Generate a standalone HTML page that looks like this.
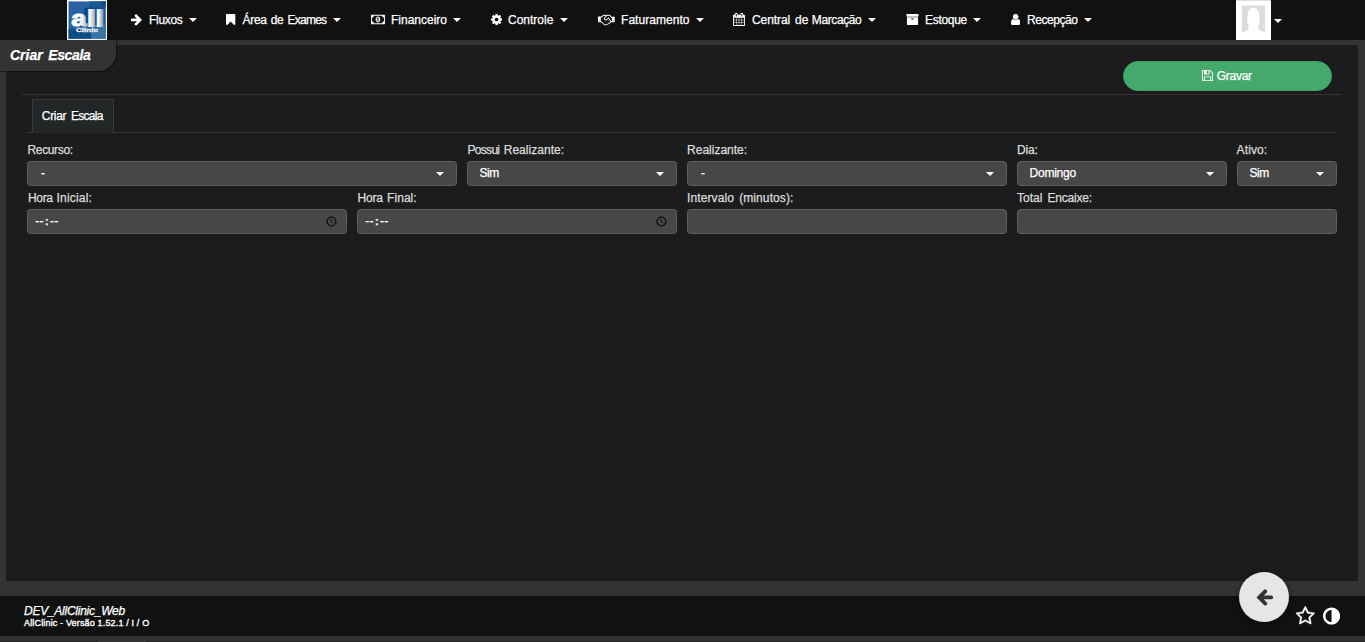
<!DOCTYPE html>
<html lang="pt-br">
<head>
<meta charset="utf-8">
<title>Criar Escala</title>
<style>
*{box-sizing:border-box;margin:0;padding:0}
html,body{width:1365px;height:642px;overflow:hidden;background:#333;color:#fff;
  font-family:"Liberation Sans","DejaVu Sans",sans-serif;font-size:12px;-webkit-text-stroke-width:0.25px}
.ic{position:absolute;display:block}
.navbar{position:absolute;left:0;top:0;width:1365px;height:40px;background:#111}
.logo{position:absolute;left:67px;top:0;width:40px;height:40px;display:block}
.nav{list-style:none}
.nav li{display:block}
.nav a.t{position:absolute;top:13px;line-height:15px;font-size:12px;color:#fff;white-space:nowrap}
.caret{position:absolute;width:0;height:0;border-left:4px solid transparent;border-right:4px solid transparent;border-top:4px solid #fff}
.avatar{position:absolute;left:1236px;top:0;width:35px;height:40px;display:block}
.panel{position:absolute;left:6px;top:45px;width:1352px;height:536px;background:#1c1c1c}
.pagetitle{position:absolute;left:0;top:40px;width:116.4px;height:31px;background:#333;border-bottom-right-radius:17.5px;box-shadow:0.5px 0.5px 1px rgba(0,0,0,.45);
  font-weight:bold;font-style:italic;font-size:14px;line-height:31px;padding-left:10px;color:#fff;white-space:nowrap}
.btn{position:absolute;left:1123px;top:61px;width:209px;height:30px;border-radius:15px;background:#44a96b;border:1px solid #3fa266;color:#fff}
.btn span{position:absolute;left:92.7px;top:7px;line-height:15px;font-size:12px;letter-spacing:-0.25px}
.hr1{position:absolute;left:22px;top:94px;width:1320px;height:1px;background:#333}
.hr2{position:absolute;left:27px;top:132px;width:1310px;height:1px;background:#333}
.tab{position:absolute;left:32px;top:99px;width:82px;height:34px;background:#232627;border:1px solid #373a3b;border-bottom:none;
  font-size:12px;line-height:32px;padding-left:8.8px;color:#fff;white-space:nowrap;letter-spacing:-0.3px}
label{position:absolute;font-size:12px;line-height:15px;color:#ddd;white-space:nowrap}
.fld{position:absolute;height:25px;background:#474747;border:1px solid #5e5e5e;border-radius:3.5px;color:#fff;font-size:12px;line-height:23px;white-space:nowrap}
.sel{padding-left:11.6px}
.inp{padding-left:7.2px}
.inp .d{letter-spacing:0.35px}
.inp b{margin:0 1.4px 0 1px;font-size:11px}
.fld .caret{right:12px;top:10px}
.clk{position:absolute;right:8.7px;top:5.6px}
.footer{position:absolute;left:0;top:596px;width:1365px;height:40px;background:#111}
.footer .l1{position:absolute;left:24px;top:8px;font-style:italic;font-size:12px;line-height:15px;white-space:nowrap;letter-spacing:-0.25px}
.footer .l2{position:absolute;left:24px;top:21.5px;font-size:9px;line-height:11px;white-space:nowrap;-webkit-text-stroke-width:0.35px;letter-spacing:0.16px}
.bottom{position:absolute;left:0;top:636px;width:1365px;height:6px;background:#333}
.bottom i{position:absolute;left:0;top:5px;width:98px;height:1px;background:#252525}
.bottom b{position:absolute;left:146px;top:5px;width:1219px;height:1px;background:#252525}
.back{position:absolute;left:1239px;top:572px;width:50px;height:50px;border-radius:50%;background:#e6e6e6;box-shadow:0 1px 6px rgba(0,0,0,.45)}
</style>
</head>
<body>
<div class="navbar">
  <svg class="logo" viewBox="0 0 40 40">
    <defs>
      <linearGradient id="ga" gradientUnits="userSpaceOnUse" x1="3.3" x2="15" y1="0" y2="0"><stop offset="0.6" stop-color="#fff"/><stop offset="1" stop-color="#b9c3cf"/></linearGradient>
      <linearGradient id="gl" gradientUnits="userSpaceOnUse" x1="16" x2="21" y1="0" y2="0"><stop offset="0.3" stop-color="#fff"/><stop offset="1" stop-color="#aeb6c0"/></linearGradient>
      <linearGradient id="gl2" gradientUnits="userSpaceOnUse" x1="22.6" x2="27.6" y1="0" y2="0"><stop offset="0.3" stop-color="#fff"/><stop offset="1" stop-color="#7f9dbd"/></linearGradient>
    </defs>
    <rect width="40" height="40" fill="#fff"/>
    <rect x="1.5" y="1.4" width="37.3" height="37.3" fill="#2b62a3"/>
    <rect x="22.4" y="1.4" width="16.4" height="7" fill="#1a5895"/>
    <rect x="34" y="1.4" width="4.8" height="4.2" fill="#0c4a86"/>
    <rect x="17" y="7.5" width="20.5" height="18" fill="#0c4b8b"/>
    <rect x="1.5" y="28.8" width="23" height="9.9" fill="#0e4d85"/>
    <rect x="24.5" y="25.3" width="14.3" height="13.4" fill="#3d74a8"/>
    <text transform="translate(0 25.95) scale(1.3 1)" x="3.3 15.7 22.25" y="0" font-family="Liberation Sans, sans-serif" font-weight="bold" font-size="22.4" stroke-width="2" stroke-linejoin="miter"><tspan font-size="21.4" stroke-width="1" fill="url(#ga)" stroke="url(#ga)">a</tspan><tspan fill="url(#gl)" stroke="url(#gl)">l</tspan><tspan fill="url(#gl2)" stroke="url(#gl2)">l</tspan></text>
    <text x="9" y="31.9" textLength="22" lengthAdjust="spacingAndGlyphs" font-family="Liberation Sans, sans-serif" font-weight="bold" font-size="5.7" fill="#f2f2f2" stroke="#f2f2f2" stroke-width="0.3">Clinic</text>
  </svg>
  <ul class="nav">
    <li><svg class="ic" style="left:131.30px;top:13.46px;" width="11.14" height="13" viewBox="0 0 1536 1792"><path fill="#fff" d="M1472 960C1472 926 1459 893 1435 870L784 219C760 195 727 181 693 181C659 181 627 195 603 219L528 294C504 317 490 350 490 384C490 418 504 451 528 474L821 768H117C45 768 0 828 0 896V1024C0 1092 45 1152 117 1152H821L528 1445C504 1469 490 1502 490 1536C490 1570 504 1603 528 1627L603 1702C627 1725 659 1739 693 1739C727 1739 760 1725 784 1702L1435 1051C1459 1027 1472 994 1472 960Z"/></svg><a class="t" style="left:149.0px;letter-spacing:-0.3px">Fluxos</a><b class="caret" style="left:189px;top:18px"></b></li>
    <li><svg class="ic" style="left:226.40px;top:13.46px;" width="9.29" height="13" viewBox="0 0 1280 1792"><path fill="#fff" d="M1164 128C1133 128 147 128 116 128C101 128 86 131 72 137C28 154 0 195 0 240V1529C0 1574 28 1615 72 1632C86 1638 101 1641 116 1641C147 1641 176 1629 199 1608L640 1184L1081 1608C1104 1629 1133 1640 1164 1640C1179 1640 1194 1638 1208 1632C1252 1615 1280 1574 1280 1529V240C1280 195 1252 154 1208 137C1194 131 1179 128 1164 128Z"/></svg><a class="t" style="left:242.5px;letter-spacing:-0.3px">Área <span style="margin-left:1px">de</span> <span style="letter-spacing:-0.72px;margin-left:0.9px">Exames</span></a><b class="caret" style="left:333px;top:18px"></b></li>
    <li><svg class="ic" style="left:370.80px;top:13.46px;" width="13.93" height="13" viewBox="0 0 1920 1792"><path fill="#fff" d="M768 1152V1056H896V768H894C878 793 863 804 839 825L762 745L910 608H1024V1056H1152V1152ZM1280 896C1280 714 1170 480 960 480C750 480 640 714 640 896C640 1078 750 1312 960 1312C1170 1312 1280 1078 1280 896ZM1792 1152C1651 1152 1536 1267 1536 1408H384C384 1267 269 1152 128 1152V640C269 640 384 525 384 384H1536C1536 525 1651 640 1792 640V1152ZM1920 320C1920 285 1891 256 1856 256H64C29 256 0 285 0 320V1472C0 1507 29 1536 64 1536H1856C1891 1536 1920 1507 1920 1472Z"/></svg><a class="t" style="left:391.0px;letter-spacing:0px">Financeiro</a><b class="caret" style="left:453px;top:18px"></b></li>
    <li><svg class="ic" style="left:490.80px;top:13.46px;" width="11.14" height="13" viewBox="0 0 1536 1792"><path fill="#fff" d="M1024 896C1024 1037 909 1152 768 1152C627 1152 512 1037 512 896C512 755 627 640 768 640C909 640 1024 755 1024 896ZM1536 787C1536 770 1524 754 1507 751L1324 723C1314 690 1300 657 1283 625C1317 578 1354 534 1388 488C1393 481 1396 474 1396 465C1396 457 1394 449 1389 443C1347 384 1277 322 1224 273C1217 267 1208 263 1199 263C1190 263 1181 266 1175 272L1033 379C1004 364 974 352 943 342L915 158C913 141 897 128 879 128H657C639 128 625 140 621 156C605 216 599 281 592 342C561 352 530 365 501 380L363 273C355 267 346 263 337 263C303 263 168 409 144 442C139 449 135 456 135 465C135 474 139 482 145 489C182 534 218 579 252 627C236 657 223 687 213 719L27 747C12 750 0 768 0 783V1005C0 1022 12 1038 29 1041L212 1068C222 1102 236 1135 253 1167C219 1214 182 1258 148 1304C143 1311 140 1318 140 1327C140 1335 142 1343 147 1350C189 1408 259 1470 312 1518C319 1525 328 1529 337 1529C346 1529 355 1526 362 1520L503 1413C532 1428 562 1440 593 1450L621 1634C623 1651 639 1664 657 1664H879C897 1664 911 1652 915 1636C931 1576 937 1511 944 1450C975 1440 1006 1427 1035 1412L1173 1520C1181 1525 1190 1529 1199 1529C1233 1529 1368 1382 1392 1350C1398 1343 1401 1336 1401 1327C1401 1318 1397 1309 1391 1302C1354 1257 1318 1213 1284 1164C1300 1135 1312 1105 1323 1073L1508 1045C1524 1042 1536 1024 1536 1009Z"/></svg><a class="t" style="left:508.0px;letter-spacing:0px">Controle</a><b class="caret" style="left:560px;top:18px"></b></li>
    <li><svg class="ic" style="left:598.00px;top:13.46px;" width="16.71" height="13" viewBox="0 0 2304 1792"><path fill="#fff" d="M192 1152C108 1152 108 1024 192 1024C276 1024 276 1152 192 1152ZM1665 1094C1738 1188 1676 1313 1557 1313C1545 1313 1523 1312 1514 1303C1517 1336 1487 1378 1464 1399C1429 1432 1385 1447 1337 1443C1314 1520 1227 1562 1152 1536C1120 1568 1072 1583 1027 1583C940 1583 861 1531 800 1472L503 1180C468 1146 428 1152 384 1152V608H539L697 450C739 408 796 384 855 384C922 384 997 373 1059 405L882 611C804 702 804 834 880 926C987 1054 1184 1057 1294 932L1419 792C1509 886 1586 991 1665 1094ZM1824 1152C1818 1100 1795 1052 1764 1012C1715 949 1667 884 1617 822C1580 778 1539 735 1501 691C1522 626 1438 578 1392 629L1199 847C1140 913 1035 912 978 844C942 800 942 738 979 694L1188 451C1224 409 1278 384 1334 384H1501C1565 384 1628 412 1670 460L1827 640H1920V1152ZM2112 1152C2028 1152 2028 1024 2112 1024C2196 1024 2196 1152 2112 1152ZM2304 576C2304 541 2275 512 2240 512H1885C1770 380 1691 256 1501 256H1334C1269 256 1206 276 1153 312C1100 276 1037 256 972 256H855C681 256 601 364 485 480H64C29 480 0 509 0 544V1216C0 1251 29 1280 64 1280H422L709 1562C832 1683 1018 1764 1183 1671C1272 1677 1361 1635 1416 1565C1490 1549 1556 1501 1599 1438C1691 1425 1770 1367 1806 1280H2240C2275 1280 2304 1251 2304 1216Z"/></svg><a class="t" style="left:621.0px;letter-spacing:0.05px">Faturamento</a><b class="caret" style="left:696px;top:18px"></b></li>
    <li><svg class="ic" style="left:733.20px;top:13.46px;" width="12.07" height="13" viewBox="0 0 1664 1792"><path fill="#fff" d="M128 1664V1376H416V1664ZM480 1664V1376H800V1664ZM128 1312V992H416V1312ZM480 1312V992H800V1312ZM128 928V640H416V928ZM864 1664V1376H1184V1664ZM480 928V640H800V928ZM1248 1664V1376H1536V1664ZM864 1312V992H1184V1312ZM512 448C512 465 497 480 480 480H416C399 480 384 465 384 448V160C384 143 399 128 416 128H480C497 128 512 143 512 160V448ZM1248 1312V992H1536V1312ZM864 928V640H1184V928ZM1248 928V640H1536V928ZM1280 448C1280 465 1265 480 1248 480H1184C1167 480 1152 465 1152 448V160C1152 143 1167 128 1184 128H1248C1265 128 1280 143 1280 160V448ZM1664 384C1664 314 1606 256 1536 256H1408V160C1408 72 1336 0 1248 0H1184C1096 0 1024 72 1024 160V256H640V160C640 72 568 0 480 0H416C328 0 256 72 256 160V256H128C58 256 0 314 0 384V1664C0 1734 58 1792 128 1792H1536C1606 1792 1664 1734 1664 1664Z"/></svg><a class="t" style="left:752px;letter-spacing:-0.08px">Central <span style="margin-left:1.6px;letter-spacing:0.1px">de</span> <span style="letter-spacing:-0.4px">Marcação</span></a><b class="caret" style="left:868px;top:18px"></b></li>
    <li><svg class="ic" style="left:906.00px;top:13.46px;" width="13.00" height="13" viewBox="0 0 1792 1792"><path fill="#fff" d="M1088 832C1088 867 1059 896 1024 896H768C733 896 704 867 704 832C704 797 733 768 768 768H1024C1059 768 1088 797 1088 832ZM1664 640C1664 605 1635 576 1600 576H192C157 576 128 605 128 640V1600C128 1635 157 1664 192 1664H1600C1635 1664 1664 1635 1664 1600ZM1728 192C1728 157 1699 128 1664 128H128C93 128 64 157 64 192V448C64 483 93 512 128 512H1664C1699 512 1728 483 1728 448Z"/></svg><a class="t" style="left:925.0px;letter-spacing:-0.3px">Estoque</a><b class="caret" style="left:973px;top:18px"></b></li>
    <li><svg class="ic" style="left:1011.00px;top:13.46px;" width="9.29" height="13" viewBox="0 0 1280 1792"><path fill="#fff" d="M1280 1399C1280 1136 1215 832 953 832C872 911 762 960 640 960C518 960 408 911 327 832C65 832 0 1136 0 1399C0 1545 96 1664 213 1664H1067C1184 1664 1280 1545 1280 1399ZM1024 512C1024 300 852 128 640 128C428 128 256 300 256 512C256 724 428 896 640 896C852 896 1024 724 1024 512Z"/></svg><a class="t" style="left:1027.0px;letter-spacing:-0.45px">Recepção</a><b class="caret" style="left:1084px;top:18px"></b></li>
  </ul>
  <svg class="avatar" viewBox="0 0 35 40">
    <rect width="35" height="40" fill="#fff"/>
    <rect width="35" height="1" fill="#ddd"/>
    <rect x="6" y="5.4" width="23" height="27.5" fill="#dcdcdc"/>
    <path fill="#fff" d="M6 33 L6 32.6 L12 30 C13 27 13 26 12.2 24.5 C11 23 11 21 11.5 18.5 C11.5 12 13 8.5 17.5 7.5 C22 8.5 23.5 12 23.5 18.5 C24 21 24 23 22.8 24.5 C22 26 22 27 23 30 L29 32.6 L29 33 Z"/>
  </svg>
  <b class="caret" style="left:1274px;top:19px"></b>
</div>
<div class="panel"></div>
<div class="pagetitle">Criar <span style="margin-left:1.6px;letter-spacing:-0.35px">Escala</span></div>
<div class="btn"><svg class="ic" style="left:78.10px;top:6.96px;" width="11.14" height="13" viewBox="0 0 1536 1792"><path fill="#fff" d="M384 1536V1152H1152V1536ZM1280 1536V1120C1280 1067 1237 1024 1184 1024H352C299 1024 256 1067 256 1120V1536H128V256H256V672C256 725 299 768 352 768H928C981 768 1024 725 1024 672V256C1044 256 1083 272 1097 286L1378 567C1391 580 1408 621 1408 640V1536ZM896 608C896 625 881 640 864 640H672C655 640 640 625 640 608V288C640 271 655 256 672 256H864C881 256 896 271 896 288V608ZM1536 640C1536 587 1506 514 1468 476L1188 196C1150 158 1077 128 1024 128H96C43 128 0 171 0 224V1568C0 1621 43 1664 96 1664H1440C1493 1664 1536 1621 1536 1568Z"/></svg><span>Gravar</span></div>
<div class="hr1"></div>
<div class="hr2"></div>
<div class="tab"><span style="letter-spacing:-0.3px">Criar</span> <span style="margin-left:1.6px;letter-spacing:-0.7px">Escala</span></div>
<label style="left:27.5px;top:143px;letter-spacing:-0.35px">Recurso:</label>
<div class="fld sel" style="left:27px;top:161px;width:430px;letter-spacing:0px"><span style="margin-left:1.3px">-</span><b class="caret"></b></div>
<label style="left:467.5px;top:143px;letter-spacing:0px"><span style="letter-spacing:-0.7px;margin-left:0px">Possui</span> <span style="letter-spacing:0.04px;margin-left:1px">Realizante:</span></label>
<div class="fld sel" style="left:467px;top:161px;width:210px;letter-spacing:-0.5px">Sim<b class="caret"></b></div>
<label style="left:687.1px;top:143px;letter-spacing:0px">Realizante:</label>
<div class="fld sel" style="left:687px;top:161px;width:320px;letter-spacing:0px"><span style="margin-left:1.3px">-</span><b class="caret"></b></div>
<label style="left:1017px;top:143px;letter-spacing:-0.2px">Dia:</label>
<div class="fld sel" style="left:1017px;top:161px;width:210px;letter-spacing:-0.25px">Domingo<b class="caret"></b></div>
<label style="left:1236.6px;top:143px;letter-spacing:0.1px">Ativo:</label>
<div class="fld sel" style="left:1237px;top:161px;width:100px;letter-spacing:-0.5px">Sim<b class="caret"></b></div>
<label style="left:28px;top:191px;letter-spacing:0px"><span style="letter-spacing:-0.35px;margin-left:0px">Hora</span> <span style="letter-spacing:0.2px;margin-left:0.5px">Inicial:</span></label>
<div class="fld inp" style="left:27px;top:209px;width:320px"><span class="d">--</span><b>:</b><span class="d">--</span><svg class="clk" width="11" height="11" viewBox="0 0 11 11"><circle cx="5.5" cy="5.5" r="4.35" fill="none" stroke="#0a0a0a" stroke-width="1.35"/><path d="M5.1 3V5.5L7.3 7.1" fill="none" stroke="#0a0a0a" stroke-width="0.9"/></svg></div>
<label style="left:357.5px;top:191px;letter-spacing:0px"><span style="letter-spacing:-0.2px;margin-left:0px">Hora</span> <span style="letter-spacing:0.05px;margin-left:1px">Final:</span></label>
<div class="fld inp" style="left:357px;top:209px;width:320px"><span class="d">--</span><b>:</b><span class="d">--</span><svg class="clk" width="11" height="11" viewBox="0 0 11 11"><circle cx="5.5" cy="5.5" r="4.35" fill="none" stroke="#0a0a0a" stroke-width="1.35"/><path d="M5.1 3V5.5L7.3 7.1" fill="none" stroke="#0a0a0a" stroke-width="0.9"/></svg></div>
<label style="left:687.1px;top:191px;letter-spacing:0.1px">Intervalo <span style="letter-spacing:0.1px;margin-left:1.7px">(minutos):</span></label>
<div class="fld inp" style="left:687px;top:209px;width:320px"></div>
<label style="left:1017.1px;top:191px;letter-spacing:0px">Total <span style="letter-spacing:-0.22px;margin-left:1.8px">Encaixe:</span></label>
<div class="fld inp" style="left:1017px;top:209px;width:320px"></div>

<div class="footer"><div class="l1">DEV_AllClinic_Web</div><div class="l2">AllClinic - Versão 1.52.1 / I / O</div></div>
<div class="bottom"><i></i><b></b></div>
<div class="back"><svg class="ic" style="left:0;top:0" width="50" height="50" viewBox="0 0 50 50"><path d="M26.2 19.3L20.2 25.4L26.2 31.5M21.5 25.4H32.2" fill="none" stroke="#333" stroke-width="3.9" stroke-linecap="round" stroke-linejoin="miter"/></svg></div>
<svg class="ic" style="left:1296.20px;top:606.26px;overflow:visible" width="18.57" height="20" viewBox="0 0 1664 1792"><path stroke="#fff" stroke-width="40" fill="#fff" d="M1137 1004 1209 1425 832 1226 454 1425 527 1004 221 707 643 645 832 263 1021 645 1443 707ZM1664 647C1664 617 1632 605 1608 601L1106 528L881 73C872 54 855 32 832 32C809 32 792 54 783 73L558 528L56 601C31 605 0 617 0 647C0 665 13 682 25 695L389 1049L303 1549C302 1556 301 1562 301 1569C301 1595 314 1619 343 1619C357 1619 370 1614 383 1607L832 1371L1281 1607C1293 1614 1307 1619 1321 1619C1350 1619 1362 1596 1362 1569C1362 1562 1362 1556 1361 1549L1275 1049L1638 695C1651 682 1664 665 1664 647Z"/></svg>
<svg class="ic" style="left:1323.00px;top:606.26px;" width="17.14" height="20" viewBox="0 0 1536 1792"><path fill="#fff" d="M768 1440C468 1440 224 1196 224 896C224 596 468 352 768 352V1440ZM1536 896C1536 472 1192 128 768 128C344 128 0 472 0 896C0 1320 344 1664 768 1664C1192 1664 1536 1320 1536 896Z"/></svg>
</body>
</html>
